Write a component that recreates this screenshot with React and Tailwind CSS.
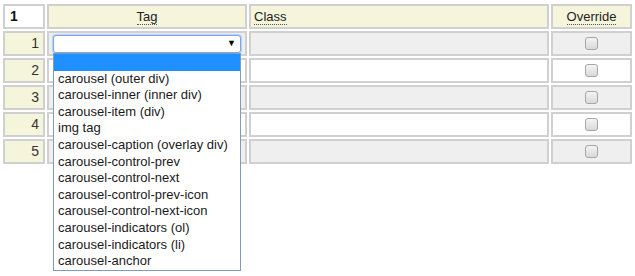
import React from 'react';

const options = [
    '',
    'carousel (outer div)',
    'carousel-inner (inner div)',
    'carousel-item (div)',
    'img tag',
    'carousel-caption (overlay div)',
    'carousel-control-prev',
    'carousel-control-next',
    'carousel-control-prev-icon',
    'carousel-control-next-icon',
    'carousel-indicators (ol)',
    'carousel-indicators (li)',
    'carousel-anchor',
];

const Checkbox = () => (
    <div className="w-[13px] h-[13px] rounded-[3px] border border-[#a6a6a6] bg-gradient-to-b from-[#f4f4f4] to-[#d9d9d9]" />
);

const App = () => {
    const rows = [1, 2, 3, 4, 5];

    return (
        <div className="w-[635px] h-[276px] bg-white pl-[3px] pt-[4px] text-[13px] text-[#222]" style={{ fontFamily: '"Liberation Sans", Arial, sans-serif' }}>
            <div className="grid grid-cols-[42px_200px_300px_81px] auto-rows-[25px] gap-[2px]">
                {/* header */}
                <div className="border-2 border-[#d0d0d0] bg-white flex items-center pl-[5px] text-[14px] font-bold text-[#111]">1</div>
                <div className="border-2 border-[#d0d0d0] bg-[#f5f5dc] flex items-center justify-center">
                    <span className="border-b border-dotted border-[#555] leading-[15px]">Tag</span>
                </div>
                <div className="border-2 border-[#d0d0d0] bg-[#f5f5dc] flex items-center pl-[3px]">
                    <span className="border-b border-dotted border-[#555] leading-[15px]">Class</span>
                </div>
                <div className="border-2 border-[#d0d0d0] bg-[#f5f5dc] flex items-center justify-center">
                    <span className="border-b border-dotted border-[#555] leading-[15px]">Override</span>
                </div>

                {rows.map(n => {
                    const grey = n % 2 === 1;
                    const cellBg = grey ? 'bg-[#efefef]' : 'bg-white';
                    return (
                        <React.Fragment key={n}>
                            <div className="border-2 border-[#d0d0d0] bg-[#f5f5dc] flex items-center justify-end pr-[4px] text-[14px] text-[#333]">{n}</div>
                            <div className={`border-2 border-[#d0d0d0] ${cellBg} relative flex items-center`}>
                                {n === 1 && (
                                    <>
                                        <div className="ml-[4px] w-[188px] h-[18px] rounded-[3px] border border-[#7aa7e8] bg-white shadow-[0_0_1px_1px_#b7d0f5] flex items-center justify-end pr-[4px]">
                                            <span className="text-[9px] text-black leading-none">▼</span>
                                        </div>
                                        <div className="absolute left-[4px] top-[20px] w-[188px] border border-[#7f9db9] bg-white z-10">
                                            {options.map((o, i) => (
                                                <div key={i} className={`h-[16.6px] leading-[16.6px] pl-[4px] whitespace-nowrap ${i === 0 ? 'bg-[#1e90ff]' : ''} text-[#1a1a1a]`}>
                                                    {o}
                                                </div>
                                            ))}
                                        </div>
                                    </>
                                )}
                            </div>
                            <div className={`border-2 border-[#d0d0d0] ${cellBg}`} />
                            <div className={`border-2 border-[#d0d0d0] ${cellBg} flex items-center justify-center`}>
                                <Checkbox />
                            </div>
                        </React.Fragment>
                    );
                })}
            </div>
        </div>
    );
};

export default App;
